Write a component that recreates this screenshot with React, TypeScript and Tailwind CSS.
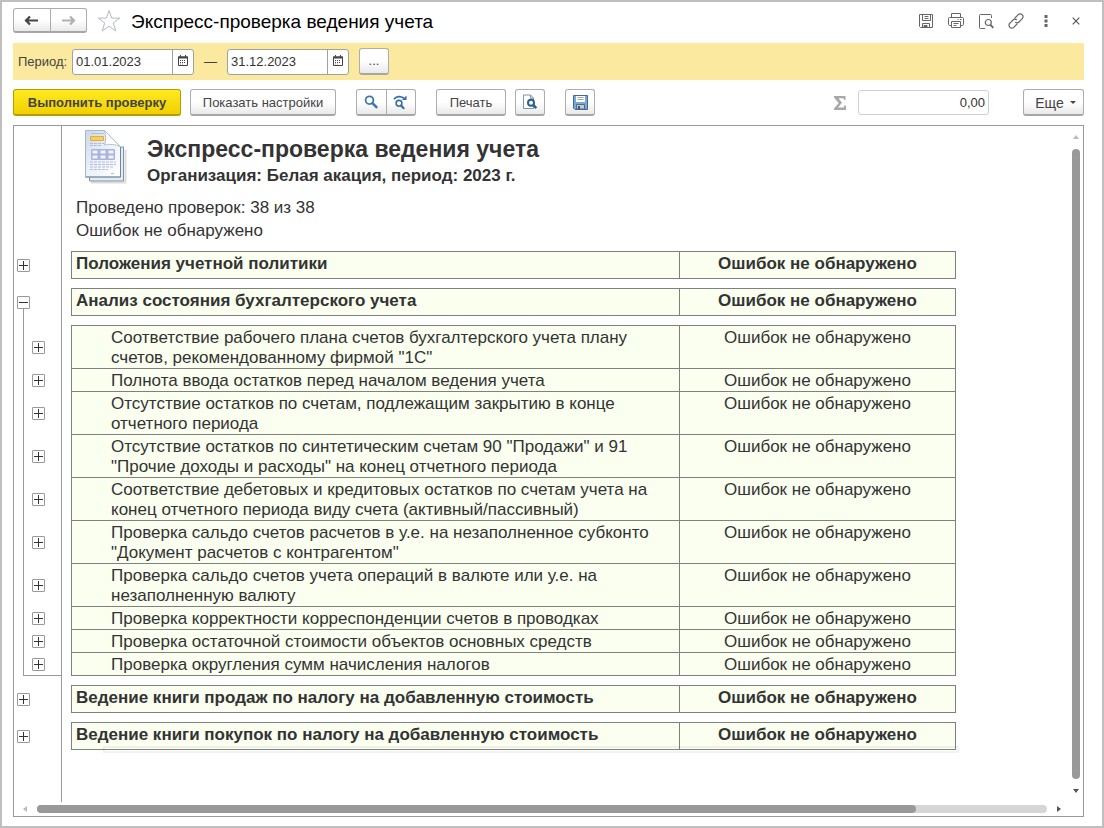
import React, { useState } from "react";

interface Check {
  title: string;
  tall?: boolean;
}

interface Group {
  title: string;
  checks?: Check[];
}

const OK_TEXT = "Ошибок не обнаружено";

const groups: Group[] = [
  { title: "Положения учетной политики" },
  {
    title: "Анализ состояния бухгалтерского учета",
    checks: [
      {
        title:
          'Соответствие рабочего плана счетов бухгалтерского учета плану счетов, рекомендованному фирмой "1С"',
        tall: true,
      },
      { title: "Полнота ввода остатков перед началом ведения учета" },
      {
        title:
          "Отсутствие остатков по счетам, подлежащим закрытию в конце отчетного периода",
        tall: true,
      },
      {
        title:
          'Отсутствие остатков по синтетическим счетам 90 "Продажи" и 91 "Прочие доходы и расходы" на конец отчетного периода',
        tall: true,
      },
      {
        title:
          "Соответствие дебетовых и кредитовых остатков по счетам учета на конец отчетного периода виду счета (активный/пассивный)",
        tall: true,
      },
      {
        title:
          'Проверка сальдо счетов расчетов в у.е. на незаполненное субконто "Документ расчетов с контрагентом"',
        tall: true,
      },
      {
        title:
          "Проверка сальдо счетов учета операций в валюте или у.е. на незаполненную валюту",
        tall: true,
      },
      { title: "Проверка корректности корреспонденции счетов в проводках" },
      { title: "Проверка остаточной стоимости объектов основных средств" },
      { title: "Проверка округления сумм начисления налогов" },
    ],
  },
  { title: "Ведение книги продаж по налогу на добавленную стоимость" },
  { title: "Ведение книги покупок по налогу на добавленную стоимость" },
];

const buttonLook =
  "flex items-center justify-center border border-[#adadad] border-b-2 border-b-[#a6a6a6] bg-linear-to-b from-white from-50% to-[#e9e9e9] text-[#444]";

/* ---------- icons ---------- */

const Arrow = ({ left, color }: { left?: boolean; color: string }) => (
  <svg width="15" height="11" viewBox="0 0 15 11" fill="none" stroke={color} strokeWidth="2.200">
    {left ? (
      <path d="M14 5.500H2.500M6 1.500 2 5.500l4 4" />
    ) : (
      <path d="M1 5.500h11.500M9 1.500l4 4-4 4" />
    )}
  </svg>
);

const StarIcon = () => (
  <svg width="24" height="24" viewBox="0 0 24 24" fill="none" stroke="#b4b9c2" strokeWidth="1">
    <path d="M12 1.500l2.700 7.600h8L16.300 14l2.500 8L12 17.200 5.200 22l2.500-8L1.300 9.100h8z" />
  </svg>
);

const CalendarIcon = () => (
  <svg width="10" height="11" viewBox="0 0 10 11">
    <path d="M.5 2h9v8.500h-9z" fill="#fff" stroke="#444" />
    <path d="M0 1.500h10v2H0zM2 0h1v2H2zM7 0h1v2H7z" fill="#444" />
    <path d="M2 5.500h6M2 7.500h6" stroke="#444" strokeDasharray="1 1" />
    <path d="M2 9h4" stroke="#999" strokeDasharray="1 1" />
  </svg>
);

const SearchIcon = () => (
  <svg width="14" height="14" viewBox="0 0 14 14" fill="none" stroke="#3f76b0">
    <circle cx="5.500" cy="5.200" r="3.900" strokeWidth="1.800" />
    <path d="M8.400 8.200l4 4" strokeWidth="2.600" strokeLinecap="round" />
  </svg>
);

const SearchNextIcon = () => (
  <svg width="15" height="15" viewBox="0 0 15 15" fill="none" stroke="#3a6ea5">
    <circle cx="6" cy="8.300" r="2.900" strokeWidth="1.600" />
    <path d="M8.200 10.500l2.400 2.700" strokeWidth="2.200" strokeLinecap="round" />
    <path d="M1 4.200C3 1 7.500.8 10.800 3" strokeWidth="1.700" />
    <path d="M13.500.5V5H8.800z" fill="#3a6ea5" stroke="none" />
  </svg>
);

const PreviewIcon = () => (
  <svg width="16" height="16" viewBox="0 0 16 16" fill="none">
    <path d="M1.500 1h7l3 3v10.500h-10z" fill="#fff" stroke="#7b93ab" />
    <path d="M8.500 1v3.200h3" stroke="#7b93ab" />
    <circle cx="9" cy="8.800" r="3" fill="#fff" stroke="#2b5f8c" strokeWidth="2" />
    <path d="M11.300 11.200l3 3" stroke="#2b5f8c" strokeWidth="2.500" />
  </svg>
);

const DiskIcon = () => (
  <svg width="15" height="15" viewBox="0 0 15 15">
    <path d="M.5.5h14v14H2l-1.500-1.500z" fill="#7ba8da" stroke="#40699a" />
    <path d="M3 1h9v6H3z" fill="#fff" />
    <path d="M4.500 2.500h6M4.500 4.500h6" stroke="#9aa7b5" />
    <path d="M3.500 9.500h8V14h-8z" fill="#c3ccd6" stroke="#506a82" />
    <path d="M5 11h2v3H5z" fill="#40596f" />
  </svg>
);

const SaveOutline = () => (
  <svg width="16" height="16" viewBox="0 0 16 16" fill="none" stroke="#666">
    <path d="M1.500 1.500h13v13h-12l-1-1z" />
    <path d="M4.500 1.500v6h8v-6M6.500 3.500h4M6.500 5.500h4M4.500 14v-3.500h7V14" />
    <path d="M6 12.500h3v2H6z" fill="#666" />
  </svg>
);

const PrinterOutline = () => (
  <svg width="16" height="16" viewBox="0 0 16 16" fill="none" stroke="#666">
    <path d="M3.500 4.500v-4h9v4" />
    <path d="M3.500 12.500h-2a1 1 0 0 1-1-1v-6a1 1 0 0 1 1-1h13a1 1 0 0 1 1 1v6a1 1 0 0 1-1 1h-2" />
    <path d="M3.500 8.500h9v6h-9zM5.500 10.500h5M5.500 12.500h3M9.500 6.500h1M12 6.500h1.500" />
  </svg>
);

const PreviewOutline = () => (
  <svg width="16" height="16" viewBox="0 0 16 16" fill="none" stroke="#666">
    <path d="M7 15.500H2.500a1 1 0 0 1-1-1v-12a1 1 0 0 1 1-1h10a1 1 0 0 1 1 1V5" />
    <circle cx="10.300" cy="9.500" r="3" strokeWidth="1.200" />
    <path d="M12.500 11.800l2.800 3" strokeWidth="1.800" />
  </svg>
);

const LinkOutline = () => (
  <svg width="16" height="16" viewBox="0 0 16 16" fill="none" stroke="#666" strokeWidth="1.200" strokeLinecap="round">
    <path d="M7 5l3.200-3.300a2.700 2.700 0 0 1 4 0 2.800 2.800 0 0 1 0 4L11 9a2.700 2.700 0 0 1-3.500.3" />
    <path d="M9 11l-3.200 3.300a2.700 2.700 0 0 1-4 0 2.800 2.800 0 0 1 0-4L5 7a2.700 2.700 0 0 1 3.500-.3" />
  </svg>
);

const DotsIcon = () => (
  <svg width="4" height="12" viewBox="0 0 4 12" fill="#666">
    <path d="M.5 0h3v3h-3zM.5 4.500h3v3h-3zM.5 9h3v3h-3z" />
  </svg>
);

const CloseIcon = () => (
  <svg width="8" height="8" viewBox="0 0 8 8" stroke="#555" strokeWidth="1.200">
    <path d="M.7.7l6.600 6.600M7.300.7L.7 7.300" />
  </svg>
);

const SigmaIcon = () => (
  <svg width="12" height="14" viewBox="0 0 12 14" fill="#a8a8a8">
    <path d="M0 0h11.500v4h-1.200L9.500 2.300H4.500L8 6.800l-4 4.700h5.700l.8-2H12V14H0v-1.500l4.700-5.400L0 1.500z" />
  </svg>
);

const ReportIcon = () => (
  <svg width="42" height="54" viewBox="0 0 42 54">
    <defs>
      <linearGradient id="sheet" x1="0" y1="0" x2="1" y2="1">
        <stop offset="0" stopColor="#c9d8ea" />
        <stop offset="0.500" stopColor="#edf2f9" />
        <stop offset="1" stopColor="#ffffff" />
      </linearGradient>
    </defs>
    <path d="M6 52.500h34.500V20" fill="none" stroke="#dcdcdc" strokeWidth="2" />
    <path d="M4.500 17h34v34h-34z" fill="#e4ebf1" stroke="#8093a5" />
    <path d="M.5.500h19L35.500 17v30H.500z" fill="url(#sheet)" stroke="#a9b9cc" />
    <path d="M.5 47h35V17" fill="none" stroke="#6f8596" />
    <path d="M19.500.500c1.500 5 1.500 10 0 14.500 5-1 11-1 16 2z" fill="#fff" stroke="#b4c0cc" />
    <path d="M6 3.500h13" stroke="#b3bfd2" />
    <path d="M5.500 6.500h13v4h-13z" fill="#f6cf63" stroke="#dfae3c" />
    <path d="M5 13.500h14M5 15.500h11M5 32h26M5 34.500h26M5 37h24M5 39.500h18M26 43.500h4" stroke="#b3bbdb" strokeDasharray="3 1" />
    <rect x="6" y="19" width="24" height="11" rx="1" fill="#aab3dd" />
    <path d="M7.500 20.500h5v3h-5zM15.500 20.500h5v3h-5zM23.500 20.500h5v3h-5zM7.500 25.500h5v3h-5zM15.500 25.500h5v3h-5zM23.500 25.500h5v3h-5z" fill="#f1f3fb" />
  </svg>
);

/* ---------- small parts ---------- */

const DateField = ({ label, initial }: { label: string; initial: string }) => {
  const [value, setValue] = useState(initial);
  return (
    <div className="flex h-[26px] w-[122px] overflow-hidden rounded-[3px] border border-[#a0a0a0] bg-white">
      <input
        aria-label={label}
        value={value}
        onChange={(e) => setValue(e.target.value)}
        className="w-0 flex-1 px-[3px] text-[13px] text-[#333] outline-none"
      />
      <button
        aria-label="Выбрать дату"
        className="flex w-[21px] justify-center border-l border-[#a0a0a0] pt-[5px]"
      >
        <CalendarIcon />
      </button>
    </div>
  );
};

const Toggle = ({ open, onClick }: { open?: boolean; onClick?: () => void }) => (
  <button
    aria-label={open ? "Свернуть" : "Развернуть"}
    onClick={onClick}
    className="flex size-[13px] items-center justify-center rounded-[1px] border border-[#999] bg-white"
  >
    <svg width="9" height="9" viewBox="0 0 9 9" stroke="#333">
      <path d={open ? "M0 4.500h9" : "M0 4.500h9M4.500 0v9"} />
    </svg>
  </button>
);

const ResultTable = ({ rows, bold }: { rows: string[]; bold?: boolean }) => (
  <table className="mb-[9px] w-[885px] table-fixed border-collapse bg-[#fafff0]">
    <colgroup>
      <col />
      <col className="w-[276px]" />
    </colgroup>
    <tbody>
      {rows.map((title) => (
        <tr key={title} className={bold ? "font-bold" : ""}>
          <td
            className={
              bold
                ? "border border-[#808080] px-1 pt-[2px] pb-1"
                : "border border-[#808080] pt-[2px] pr-6 pl-[39px]"
            }
          >
            {title}
          </td>
          <td className="border border-[#808080] px-1 pt-[2px] text-center align-top">
            {OK_TEXT}
          </td>
        </tr>
      ))}
    </tbody>
  </table>
);

const App: React.FC = () => {
  const [open, setOpen] = useState(1);
  const [total, setTotal] = useState("0,00");
  const toggle = (i: number) => setOpen(open === i ? -1 : i);

  return (
    <div className="flex min-h-screen flex-col border-2 border-[#bfbfbf] bg-white pr-[18px] pb-[9px] pl-[11px] font-['Liberation_Sans',Arial,sans-serif] text-[13px] text-[#444]">
      <header className="flex h-[41px] items-center pb-1">
        <div className="flex h-[25px] w-[74px]">
          <button aria-label="Назад" className={`${buttonLook} flex-1 rounded-l-[3px]`}>
            <Arrow left color="#444" />
          </button>
          <button aria-label="Вперед" className={`${buttonLook} -ml-px flex-1 rounded-r-[3px]`}>
            <Arrow color="#b0b0b0" />
          </button>
        </div>
        <button aria-label="В избранное" className="ml-[10px]">
          <StarIcon />
        </button>
        <h1 className="ml-[10px] flex-1 pt-[3px] text-[19px] leading-6 text-black">
          Экспресс-проверка ведения учета
        </h1>
        <div className="-mr-[7px] flex">
          {[
            ["Сохранить", <SaveOutline />],
            ["Печать", <PrinterOutline />],
            ["Просмотр", <PreviewOutline />],
            ["Ссылка", <LinkOutline />],
            ["Меню", <DotsIcon />],
            ["Закрыть", <CloseIcon />],
          ].map(([name, icon]) => (
            <button
              key={name as string}
              aria-label={name as string}
              className="flex h-6 w-[30px] items-center justify-center"
            >
              {icon}
            </button>
          ))}
        </div>
      </header>

      <div className="flex h-[37px] items-center bg-[#fce9a0] pl-[5px]">
        <span className="w-[54px]">Период:</span>
        <DateField label="Начало периода" initial="01.01.2023" />
        <span className="w-[33px] text-center">—</span>
        <DateField label="Конец периода" initial="31.12.2023" />
        <button
          aria-label="Выбрать период"
          className={`${buttonLook} ml-[10px] h-[27px] w-[30px] rounded-[3px]`}
        >
          ...
        </button>
      </div>

      <div className="flex items-center py-[9px]">
        <button className="h-[27px] w-[168px] rounded-[3px] border border-b-2 border-[#b59f00] bg-linear-to-b from-[#ffea1f] to-[#f0d000] pt-px font-bold">
          Выполнить проверку
        </button>
        <button className={`${buttonLook} ml-[9px] h-[27px] w-[146px] rounded-[3px] pt-px`}>
          Показать настройки
        </button>
        <div className="ml-5 flex h-[27px] w-[60px]">
          <button aria-label="Найти" className={`${buttonLook} flex-1 rounded-l-[3px]`}>
            <SearchIcon />
          </button>
          <button aria-label="Найти далее" className={`${buttonLook} -ml-px flex-1 rounded-r-[3px]`}>
            <SearchNextIcon />
          </button>
        </div>
        <button className={`${buttonLook} ml-5 h-[27px] w-[70px] rounded-[3px] pt-px`}>
          Печать
        </button>
        <button
          aria-label="Предварительный просмотр"
          className={`${buttonLook} ml-[9px] h-[27px] w-[30px] rounded-[3px]`}
        >
          <PreviewIcon />
        </button>
        <button
          aria-label="Сохранить отчет"
          className={`${buttonLook} ml-5 h-[27px] w-[30px] rounded-[3px]`}
        >
          <DiskIcon />
        </button>
        <div className="ml-auto flex items-center">
          <SigmaIcon />
          <input
            aria-label="Сумма"
            value={total}
            onChange={(e) => setTotal(e.target.value)}
            className="ml-3 h-[25px] w-[131px] rounded-[3px] border border-[#d0d0d0] px-[3px] text-right text-[13px] text-[#333] outline-none"
          />
          <button className={`${buttonLook} ml-[34px] h-[27px] w-[61px] gap-[6px] rounded-[3px] pt-px pl-1 text-sm`}>
            Еще
            <svg width="6" height="3" viewBox="0 0 6 3" fill="#444">
              <path d="M0 0h6L3 3z" />
            </svg>
          </button>
        </div>
      </div>

      <main className="flex flex-1 flex-col border border-[#999]">
        <div className="flex flex-1">
          <div className="w-12 shrink-0 border-r border-[#999] pt-[125px]">
            {groups.map((group, i) => (
              <React.Fragment key={group.title}>
                <div className="mb-[9px] flex h-7 items-center pt-px pl-[3px]">
                  <Toggle open={open === i && !!group.checks} onClick={() => toggle(i)} />
                </div>
                {open === i && group.checks && (
                  <div className="relative mb-[9px] ml-[9px] border-b border-l border-[#999] before:absolute before:-top-4 before:-left-px before:h-4 before:border-l before:border-[#999]">
                    {group.checks.map((check) => (
                      <div
                        key={check.title}
                        className={`flex items-center pt-px pl-2 ${check.tall ? "h-[43px]" : "h-[23px]"}`}
                      >
                        <Toggle />
                      </div>
                    ))}
                  </div>
                )}
              </React.Fragment>
            ))}
          </div>

          <div className="min-w-0 flex-1 overflow-hidden pl-[9px] text-[17px] leading-5 text-[#333]">
            <div className="flex h-[70px] pt-1 pl-[14px]">
              <ReportIcon />
              <div className="pt-1 pl-[20px] font-bold">
                <h2 className="text-[23px] leading-[30px]">
                  Экспресс-проверка ведения учета
                </h2>
                <p className="leading-6">
                  Организация: Белая акация, период: 2023 г.
                </p>
              </div>
            </div>
            <div className="h-[55px] pl-[5px] leading-[23px]">
              <p>Проведено проверок: 38 из 38</p>
              <p>{OK_TEXT}</p>
            </div>
            {groups.map((group, i) => (
              <React.Fragment key={group.title}>
                <ResultTable rows={[group.title]} bold />
                {open === i && group.checks && (
                  <ResultTable rows={group.checks.map((c) => c.title)} />
                )}
              </React.Fragment>
            ))}
            <div className="relative">
              <div className="absolute -top-[13px] left-8 h-[7px] w-[856px] border-2 border-black/5" />
            </div>
          </div>

          <div className="flex w-[15px] shrink-0 flex-col items-center pt-[9px] pb-[9px]">
            <svg width="6" height="4" viewBox="0 0 6 4" fill="#bbb">
              <path d="M0 4h6L3 0z" />
            </svg>
            <div className="my-[10px] w-2 flex-1 rounded-full bg-[#999]" />
            <svg width="6" height="4" viewBox="0 0 6 4" fill="#555">
              <path d="M0 0h6L3 4z" />
            </svg>
          </div>
        </div>

        <div className="flex h-[14px] items-center pr-[22px] pl-[9px]">
          <svg width="4" height="6" viewBox="0 0 4 6" fill="#bbb">
            <path d="M4 0v6L0 3z" />
          </svg>
          <div className="mx-[10px] h-2 flex-1 rounded-full bg-[#d6d6d6]">
            <div className="h-2 w-[87%] rounded-full bg-[#999]" />
          </div>
          <svg width="4" height="6" viewBox="0 0 4 6" fill="#555">
            <path d="M0 0v6l4-3z" />
          </svg>
        </div>
      </main>
    </div>
  );
};

export default App;
